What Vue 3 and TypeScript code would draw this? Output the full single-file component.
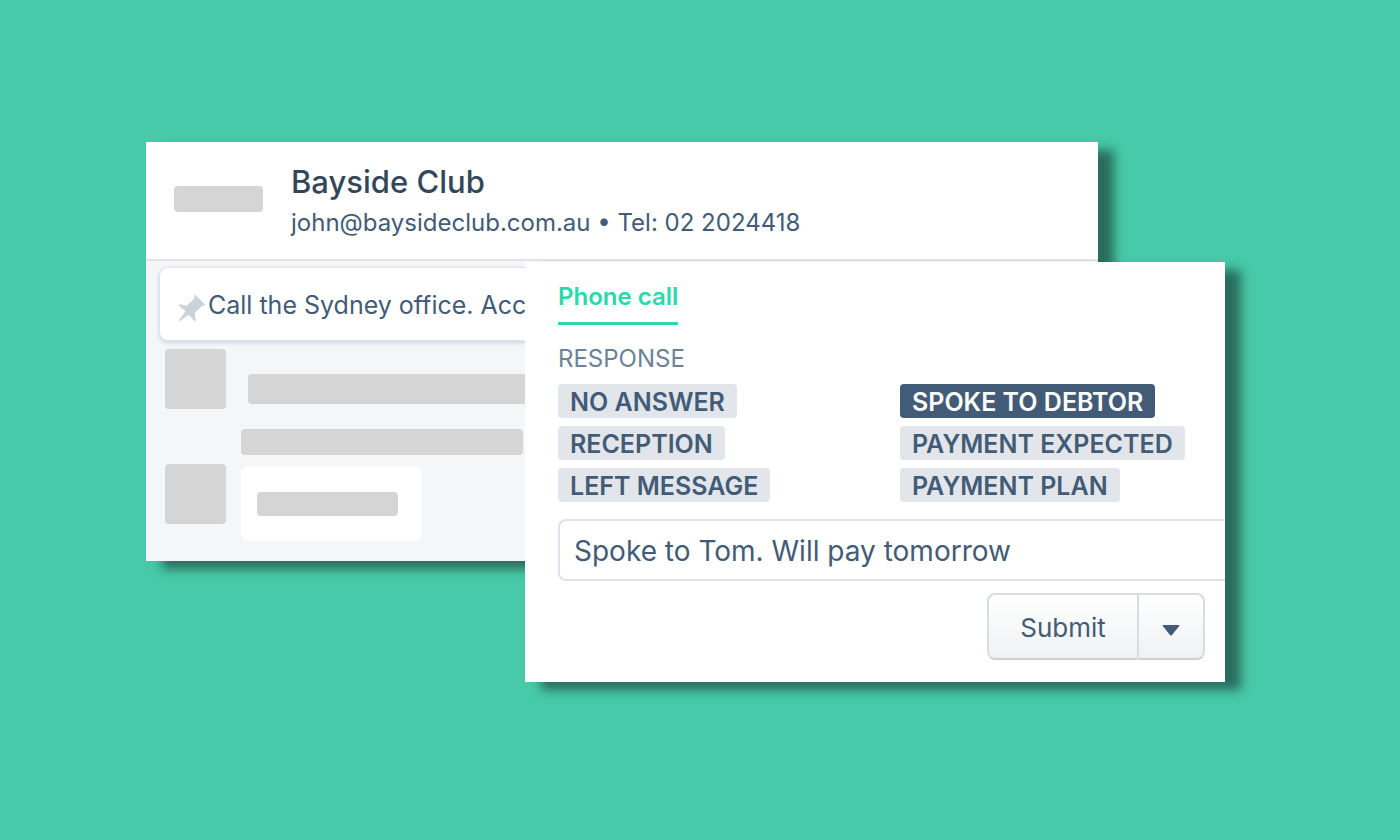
<script setup lang="ts">
import { ref } from 'vue'

const contact = {
  name: 'Bayside Club',
  email: 'john@baysideclub.com.au',
  phone: '02 2024418',
}

const responses: string[] = [
  'NO ANSWER',
  'SPOKE TO DEBTOR',
  'RECEPTION',
  'PAYMENT EXPECTED',
  'LEFT MESSAGE',
  'PAYMENT PLAN',
]

const selected = ref<string>('SPOKE TO DEBTOR')
const note = ref<string>('Spoke to Tom. Will pay tomorrow')
</script>

<template>
  <main class="stage">
    <section class="card contact-card">
      <header class="contact-head">
        <span class="block logo-block"></span>
        <div>
          <h1 class="contact-name">{{ contact.name }}</h1>
          <p class="contact-line">{{ contact.email }} • Tel: {{ contact.phone }}</p>
        </div>
      </header>
      <div class="timeline">
        <div class="pinned">
          <svg class="pin" viewBox="0 0 28 28" aria-hidden="true">
            <path d="M17 0.500 Q18 0.500 18.500 2 L27 10.500 Q27.800 11.800 24.500 11.800 L17 18.600 Q16.600 22 17.800 26.500 Q17 27.800 16 26.500 L10.800 20.800 L1.200 27.300 L0.600 26.600 L7.500 17.300 L0.900 11.600 Q0.300 10.300 2 10.300 Q6 11.800 9.300 11.300 L16.300 4.400 Q15.800 1.500 17 0.500 Z" />
          </svg>
          <p class="pinned-text">Call the Sydney office. Acc</p>
        </div>
        <div class="entries">
          <div class="entry">
            <span class="block avatar"></span>
            <div class="entry-lines">
              <span class="block line-wide"></span>
              <span class="block line-medium"></span>
            </div>
          </div>
          <div class="entry">
            <span class="block avatar"></span>
            <div class="bubble"><span class="block line-short"></span></div>
          </div>
        </div>
      </div>
    </section>

    <form class="card call-card" @submit.prevent>
      <div class="tabs" role="tablist">
        <button type="button" class="tab" role="tab" aria-selected="true">Phone call</button>
      </div>
      <h2 id="response-label" class="response-label">RESPONSE</h2>
      <div class="responses" role="group" aria-labelledby="response-label">
        <button
          v-for="item in responses"
          :key="item"
          type="button"
          class="tag"
          :class="{ active: item === selected }"
          :aria-pressed="item === selected"
          @click="selected = item"
        >{{ item }}</button>
      </div>
      <input v-model="note" class="note" type="text" aria-label="Call note" />
      <div class="actions">
        <button type="submit" class="submit">Submit</button>
        <button type="button" class="more" aria-label="More submit options">
          <svg class="caret" viewBox="0 0 18 11" aria-hidden="true">
            <path d="M1.500 0 H16.500 Q18 0 17 1.300 L10 10 Q9 11 8 10 L1 1.300 Q0 0 1.500 0 Z" />
          </svg>
        </button>
      </div>
    </form>
  </main>
</template>

<style>
body {
  margin: 0;
  background: #47caa9;
}
</style>

<style scoped>
.stage {
  box-sizing: border-box;
  min-height: 100vh;
  padding: 142px 0;
  display: grid;
  grid-template-columns: 146fr 379fr 573fr 127fr 175fr;
  grid-template-rows: 120px 299px auto;
  align-content: start;
  background: #47caa9;
  color: #425b76;
  font-family: Inter, "Liberation Sans", sans-serif;
}

.card {
  min-width: 0;
  background: #fff;
  box-shadow: 16px 8px 10px rgba(22, 46, 42, 0.6);
}

.contact-card {
  grid-column: 2 / 4;
  grid-row: 1 / 3;
  display: flex;
  flex-direction: column;
}

.contact-head {
  display: flex;
  align-items: flex-start;
  gap: 28px;
  padding: 20px 28px 15px;
  border-bottom: 2px solid #dfe3eb;
}

.block {
  display: block;
  flex: none;
  border-radius: 4px;
  background: #d5d5d5;
}

.logo-block {
  width: 89px;
  height: 26px;
  margin-top: 24px;
}

.contact-name {
  margin: 0;
  font-size: 31px;
  line-height: 40px;
  font-weight: 500;
  color: #33475b;
}

.contact-line {
  margin: 0;
  font-size: 24px;
  line-height: 42px;
}

.timeline {
  flex: 1;
  padding: 7px 0 20px 14px;
  overflow: hidden;
  background: #f5f6f8;
}

.pinned {
  display: flex;
  align-items: center;
  gap: 2px;
  height: 72px;
  padding-left: 18px;
  border-radius: 8px 0 0 8px;
  background: #fff;
  box-shadow: 0 0 1px 1px #dfe3eb, 0 2px 4px 1px #cbd6e2;
}

.pin {
  flex: none;
  width: 28px;
  height: 28px;
  margin-top: 8px;
  fill: #cbd2da;
}

.pinned-text {
  margin: 0;
  padding-top: 2px;
  font-size: 25px;
  line-height: 32px;
  white-space: nowrap;
}

.entries {
  display: grid;
  gap: 9px;
  padding: 9px 0 0 5px;
}

.entry {
  display: flex;
  gap: 15px;
}

.avatar {
  width: 61px;
  height: 60px;
}

.entry-lines {
  display: grid;
  gap: 25px;
  padding-top: 25px;
}

.line-wide {
  width: 420px;
  height: 30px;
  margin-left: 7px;
}

.line-medium {
  width: 282px;
  height: 26px;
}

.bubble {
  display: flex;
  align-items: center;
  height: 75px;
  margin-top: 2px;
  padding: 0 24px 0 16px;
  border-radius: 8px;
  background: #fff;
}

.line-short {
  width: 141px;
  height: 24px;
}

.call-card {
  grid-column: 3 / 5;
  grid-row: 2 / 4;
  padding: 17px 0 22px 33px;
  overflow: hidden;
}

button,
input {
  box-sizing: border-box;
  margin: 0;
  font-family: inherit;
  color: inherit;
}

button {
  cursor: pointer;
}

.tabs {
  display: flex;
}

.tab {
  padding: 2px 0 9px;
  border: 0;
  border-bottom: 3px solid #2ad8ac;
  background: none;
  font-size: 24px;
  line-height: 32px;
  font-weight: 600;
  color: #2ad8ac;
}

.response-label {
  margin: 18px 0 9px;
  font-size: 24px;
  line-height: 32px;
  font-weight: 400;
  color: #6c8296;
}

.responses {
  display: grid;
  grid-template-columns: 342fr 325fr;
  gap: 8px 0;
  justify-items: start;
}

.tag {
  height: 34px;
  padding: 2px 12px 0;
  border: 0;
  border-radius: 4px;
  background: #e2e6eb;
  font-size: 25px;
  line-height: 32px;
  font-weight: 600;
  white-space: nowrap;
}

.tag.active {
  background: #425b76;
  color: #fff;
}

.note {
  display: block;
  width: 100%;
  height: 62px;
  margin-top: 17px;
  padding: 2px 14px 0;
  border: 2px solid #dfe3e8;
  border-right: 0;
  border-radius: 8px 0 0 8px;
  background: #fff;
  font-size: 28px;
}

.actions {
  display: flex;
  justify-content: flex-end;
  margin-top: 12px;
  padding-right: 20px;
}

.submit,
.more {
  height: 67px;
  border: 2px solid #d8dde2;
  border-bottom-color: #cbd0d7;
  background: linear-gradient(#fff, #eff1f3);
  font-size: 26px;
}

.submit {
  width: 152px;
  padding: 2px 0 0;
  border-radius: 8px 0 0 8px;
}

.more {
  display: flex;
  align-items: center;
  justify-content: center;
  width: 66px;
  padding: 8px 0 0;
  border-left: 0;
  border-radius: 0 8px 8px 0;
}

.caret {
  width: 18px;
  height: 11px;
  fill: #425b76;
}
</style>
